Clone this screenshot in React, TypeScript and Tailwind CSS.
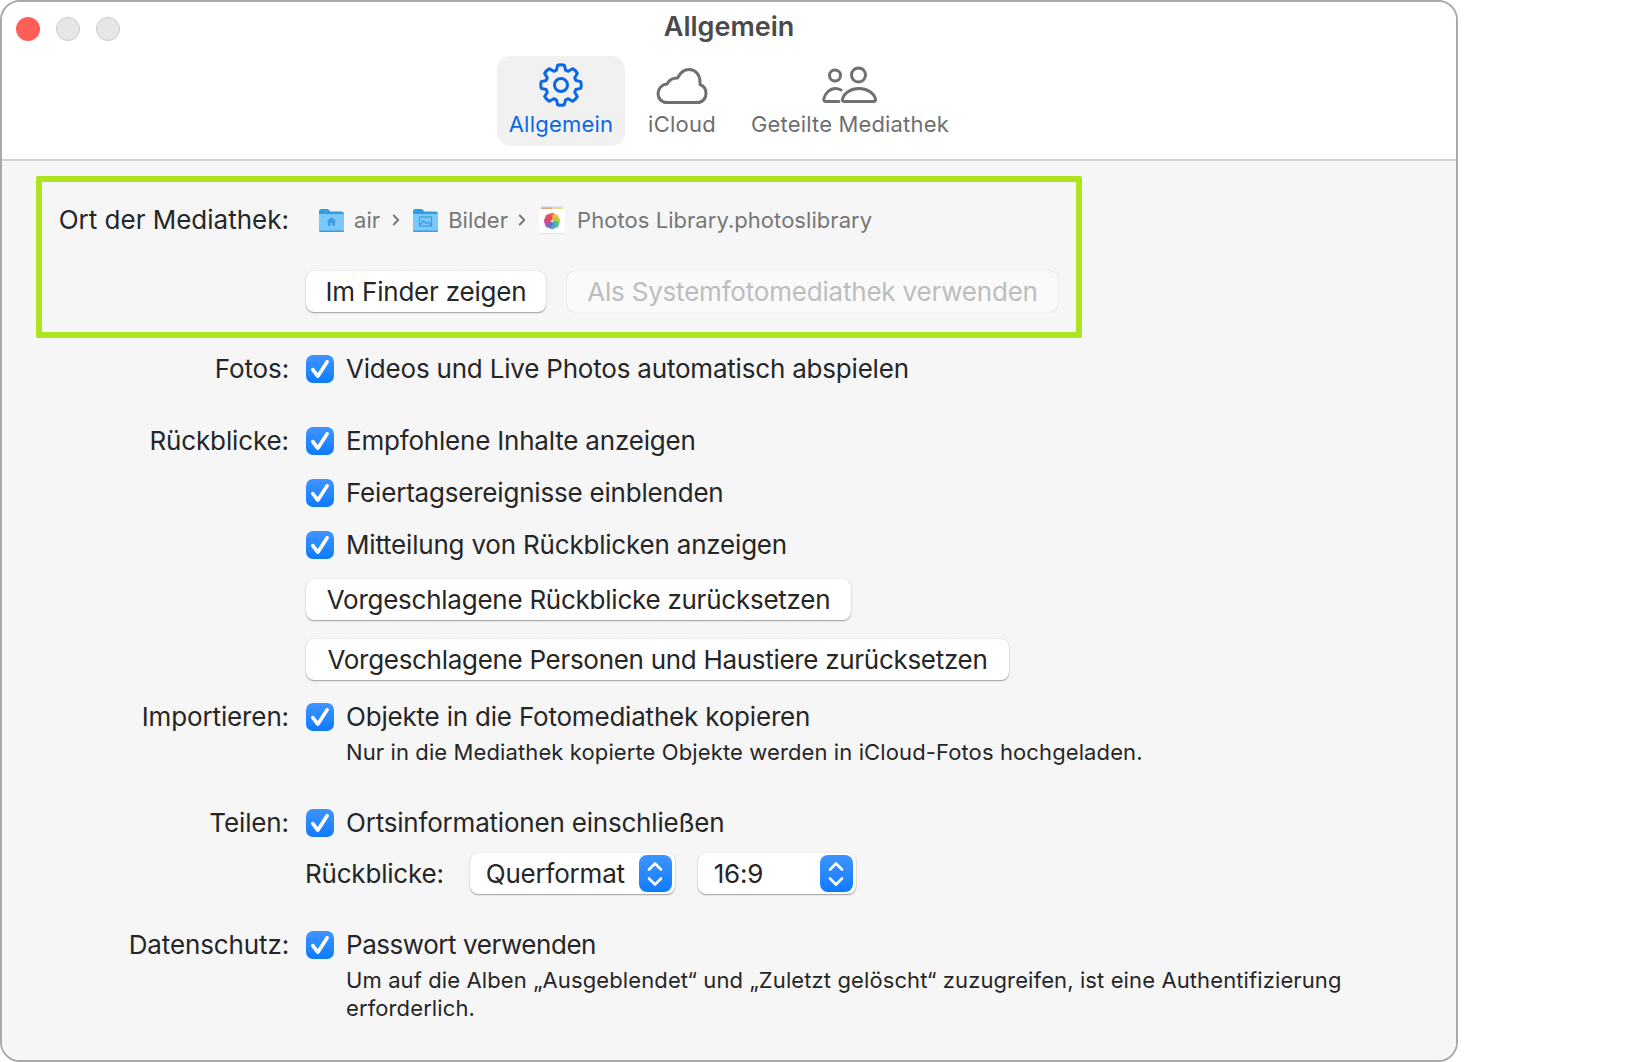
import React from 'react';
import { ChevronRight } from 'lucide-react';

// 8 tooth cog, rounded off by the stroke join
const gearPath = () => {
  const pts: string[] = [];
  for (let i = 0; i < 8; i++) {
    const a = (i * Math.PI) / 4 - Math.PI / 2;
    const at = (r: number, d: number) => `${(22 + r * Math.cos(a + d)).toFixed(2)} ${(22 + r * Math.sin(a + d)).toFixed(2)}`;
    pts.push(`${i === 0 ? 'M' : 'L'}${at(15.5, -0.3)}`, `L${at(20, -0.17)}`, `Q${at(20.8, 0)} ${at(20, 0.17)}`, `L${at(15.5, 0.3)}`);
  }
  return pts.join(' ') + ' Z';
};

const GearIcon = () => (
  <svg width="44" height="44" viewBox="0 0 44 44" fill="none" stroke="#0a68e6" strokeWidth="3" strokeLinejoin="round">
    <path d={gearPath()} />
    <circle cx="22" cy="22" r="6.500" />
  </svg>
);

const CloudIcon = () => (
  <svg width="52" height="38" viewBox="0 0 52 38" fill="none" stroke="#6f6f6f" strokeWidth="3" strokeLinejoin="round">
    <path d="M11 35.500C5.500 35.500 2 31.500 2 26.500 2 21.500 6 17.500 11 17 13 13 17 11 21.500 11 24 6 28 2.500 33 2.500 39.500 2.500 44 7.500 44 15L44 17.500C48 19 50 22.500 50 26.500 50 31.500 46.500 35.500 41.500 35.500Z" />
  </svg>
);

const PeopleIcon = () => (
  <svg width="56" height="38" viewBox="0 0 56 38" fill="none" stroke="#6f6f6f" strokeWidth="3" strokeLinecap="round" strokeLinejoin="round">
    <circle cx="13" cy="9.500" r="5.500" />
    <circle cx="36.500" cy="9" r="7" />
    <path d="M19 24C17 23 15.500 22.500 13.500 22.500 8 22.500 3 27 1.800 33 1.500 34.500 2.500 35.500 4 35.500H17" />
    <path d="M22.500 35.500H51.500C53 35.500 54 34.500 53.500 33 52 27 45 22.500 37 22.500 29 22.500 22 27 20.500 33 20 34.500 21 35.500 22.500 35.500Z" />
  </svg>
);

const FolderIcon = ({ glyph }: { glyph: 'home' | 'image' }) => (
  <svg width="27" height="26" viewBox="0 0 27 26">
    <path d="M1 4.500C1 3 2 2 3.500 2h6.500l2.500 2.500h11C25 4.500 26 5.500 26 7v2H1z" fill="#2f9ce6" />
    <path d="M1 7h25v15.500c0 1.500-1 2.500-2.500 2.500h-20C2 25 1 24 1 22.500z" fill="#7bc9fa" />
    <path d="M1 23.500h25v.5c0 .7-.6 1-1.500 1h-22C1.600 25 1 24.700 1 24z" fill="#3c9de0" />
    {glyph === 'home' ? (
      <path d="M13.500 10l5 4.500h-1.500v4.500h-2.500v-3h-2v3H10v-4.500H8.500z" fill="#3d9ddf" />
    ) : (
      <g fill="none" stroke="#3d9ddf" strokeWidth="1.200">
        <rect x="7.500" y="10" width="12" height="9" />
        <path d="M8 18l3.500-4 2.500 2.500 2-1.500 3 3" />
      </g>
    )}
  </svg>
);

const petals = ['#f0703c', '#f6b73c', '#a8cf45', '#4cb88c', '#4a9be0', '#7a62c8', '#c84a9c', '#e8445a'];

const PhotosIcon = () => (
  <svg width="28" height="28" viewBox="0 0 28 28">
    <rect x="3" y="0" width="22" height="5" fill="#d9e8ef" />
    <rect x="3" y="1.500" width="11" height="1.200" fill="#ef8a5c" />
    <rect x="14" y="1.500" width="11" height="1.200" fill="#f1d36b" />
    <rect x="1" y="3.500" width="26" height="24" rx="1.500" fill="#cfcfcf" />
    <rect x="1" y="3" width="26" height="24" rx="1.500" fill="#ffffff" />
    {petals.map((color, i) => {
      const a = (i * Math.PI) / 4 - Math.PI / 2;
      return <circle key={color} cx={14 + 4.600 * Math.cos(a)} cy={15 + 4.600 * Math.sin(a)} r="3.600" fill={color} fillOpacity="0.9" />;
    })}
  </svg>
);

const Checkbox = () => (
  <span className="flex h-[28px] w-[28px] shrink-0 items-center justify-center rounded-[7px] bg-gradient-to-b from-[#3d94ff] to-[#0a7bff]">
    <svg width="22" height="22" viewBox="0 0 20 20" fill="none" stroke="#ffffff" strokeWidth="3.300" strokeLinecap="round" strokeLinejoin="round">
      <path d="M3.500 10.500l4.500 6 8.500-13" />
    </svg>
  </span>
);

const Stepper = () => (
  <span className="flex h-[37px] w-[33px] items-center justify-center rounded-[8px] bg-gradient-to-b from-[#3d94ff] to-[#0a7bff]">
    <svg width="20" height="28" viewBox="0 0 20 28" fill="none" stroke="#ffffff" strokeWidth="2.600" strokeLinecap="round" strokeLinejoin="round">
      <path d="M4 9.500L10 3.500l6 6" />
      <path d="M4 18.500L10 24.500l6-6" />
    </svg>
  </span>
);

const PushButton = ({ children, className, disabled }: { children: React.ReactNode; className: string; disabled?: boolean }) => (
  <button
    className={
      disabled
        ? `flex h-[41px] items-center justify-center rounded-[8px] bg-[#fafafa] text-[#bdbdbd] shadow-[0_0_1px_rgba(0,0,0,0.25)] ${className}`
        : `flex h-[41px] items-center justify-center rounded-[8px] bg-white text-[#262626] shadow-[0_1px_1.5px_rgba(0,0,0,0.35),0_0_1px_rgba(0,0,0,0.2)] ${className}`
    }
  >
    {children}
  </button>
);

const Row = ({ label, children, className }: { label?: string; children: React.ReactNode; className: string }) => (
  <div className={`flex items-center ${className}`}>
    <div className="w-[287px] shrink-0 text-right tracking-[-0.12px]">{label}</div>
    <div className="ml-[17px] flex items-center">{children}</div>
  </div>
);

const CheckRow = ({ label, text, className }: { label?: string; text: string; className: string }) => (
  <Row label={label} className={className}>
    <Checkbox />
    <span className="ml-[12px]">{text}</span>
  </Row>
);

const Note = ({ children, className }: { children: React.ReactNode; className: string }) => (
  <div className={`ml-[344px] w-[1060px] text-[22px] leading-[28px] tracking-[0.11px] ${className}`}>{children}</div>
);

export default function App() {
  return (
    <div className="h-[1062px] w-[1650px] bg-white font-['Inter',sans-serif] text-[#262626]">
      <div className="flex h-[1062px] w-[1458px] flex-col overflow-hidden rounded-[20px] border-2 border-[#a9a9ad]">
        <header className="h-[159px] shrink-0 border-b-2 border-[#d2d2d2] bg-white">
          <div className="relative h-[54px]">
            <div className="absolute left-[14px] top-[15px] flex gap-[16px]">
              <span className="h-[24px] w-[24px] rounded-full bg-[#ff5f57]" />
              <span className="h-[24px] w-[24px] rounded-full border border-[#c9c9c9] bg-[#e6e6e6]" />
              <span className="h-[24px] w-[24px] rounded-full border border-[#c9c9c9] bg-[#e6e6e6]" />
            </div>
            <div className="pt-[9px] text-center text-[27px] font-semibold leading-[32px] text-[#4a4a4a]">Allgemein</div>
          </div>
          <nav className="flex pl-[495px] text-[22px] leading-[28px] tracking-[0.23px] text-[#6f6f6f]">
            <div className="flex h-[90px] w-[128px] flex-col items-center rounded-[14px] bg-[#f1f1f1] pt-[7px] text-[#0a68e6]">
              <GearIcon />
              <span className="mt-[3px]">Allgemein</span>
            </div>
            <div className="flex h-[90px] w-[114px] flex-col items-center pt-[11px]">
              <CloudIcon />
              <span className="mt-[5px]">iCloud</span>
            </div>
            <div className="ml-[12px] flex h-[90px] flex-col items-center pt-[10px] tracking-[0.16px]">
              <PeopleIcon />
              <span className="mt-[6px]">Geteilte Mediathek</span>
            </div>
          </nav>
        </header>
        <main className="flex-1 bg-[#f6f6f6] text-[26px] leading-[34px] tracking-[-0.2px]">
          <section className="ml-[34px] mt-[15px] h-[162px] w-[1046px] rounded-[2px] border-[6px] border-[#aee31f]">
            <div className="flex h-[69px] items-center pt-[6px]">
              <div className="w-[247px] shrink-0 text-right tracking-[0px]">Ort der Mediathek:</div>
              <div className="ml-[29px] flex items-center gap-[8px] text-[22px] tracking-[0.05px] text-[#777777]">
                <FolderIcon glyph="home" />
                <span className="ml-[1px]">air</span>
                <ChevronRight size={18} strokeWidth={2.500} className="-ml-[1px] text-[#777777]" />
                <span className="-ml-[1px]"><FolderIcon glyph="image" /></span>
                <span className="ml-[1px]">Bilder</span>
                <ChevronRight size={18} strokeWidth={2.500} className="-ml-[3px] text-[#777777]" />
                <span className="-ml-[1px]"><PhotosIcon /></span>
                <span className="ml-[3px]">Photos Library.photoslibrary</span>
              </div>
            </div>
            <div className="ml-[264px] mt-[20px] flex gap-[21px]">
              <PushButton className="w-[240px]">Im Finder zeigen</PushButton>
              <PushButton disabled className="w-[491px]">Als Systemfotomediathek verwenden</PushButton>
            </div>
          </section>
          <CheckRow label="Fotos:" text="Videos und Live Photos automatisch abspielen" className="mt-[14px] h-[34px]" />
          <CheckRow label="Rückblicke:" text="Empfohlene Inhalte anzeigen" className="mt-[38px] h-[34px]" />
          <CheckRow text="Feiertagsereignisse einblenden" className="mt-[18px] h-[34px]" />
          <CheckRow text="Mitteilung von Rückblicken anzeigen" className="mt-[18px] h-[34px]" />
          <Row className="mt-[17px] h-[41px] tracking-[-0.25px]">
            <PushButton className="w-[545px]">Vorgeschlagene Rückblicke zurücksetzen</PushButton>
          </Row>
          <Row className="mt-[19px] h-[41px] tracking-[-0.3px]">
            <PushButton className="w-[703px]">Vorgeschlagene Personen und Haustiere zurücksetzen</PushButton>
          </Row>
          <CheckRow label="Importieren:" text="Objekte in die Fotomediathek kopieren" className="mt-[20px] h-[34px]" />
          <Note className="mt-[4px]">Nur in die Mediathek kopierte Objekte werden in iCloud-Fotos hochgeladen.</Note>
          <CheckRow label="Teilen:" text="Ortsinformationen einschließen" className="mt-[40px] h-[34px]" />
          <Row className="mt-[13px] h-[41px]">
            <span className="-ml-[1px]">Rückblicke:</span>
            <div className="ml-[26px] flex h-[41px] w-[205px] items-center justify-between rounded-[8px] bg-white pl-[16px] pr-[3px] shadow-[0_1px_1.5px_rgba(0,0,0,0.35),0_0_1px_rgba(0,0,0,0.2)]">
              <span>Querformat</span>
              <Stepper />
            </div>
            <div className="ml-[23px] flex h-[41px] w-[158px] items-center justify-between rounded-[8px] bg-white pl-[16px] pr-[3px] shadow-[0_1px_1.5px_rgba(0,0,0,0.35),0_0_1px_rgba(0,0,0,0.2)]">
              <span>16:9</span>
              <Stepper />
            </div>
          </Row>
          <CheckRow label="Datenschutz:" text="Passwort verwenden" className="mt-[34px] h-[34px] tracking-[-0.45px]" />
          <Note className="mt-[4px]">Um auf die Alben „Ausgeblendet“ und „Zuletzt gelöscht“ zuzugreifen, ist eine Authentifizierung erforderlich.</Note>
        </main>
      </div>
    </div>
  );
}
